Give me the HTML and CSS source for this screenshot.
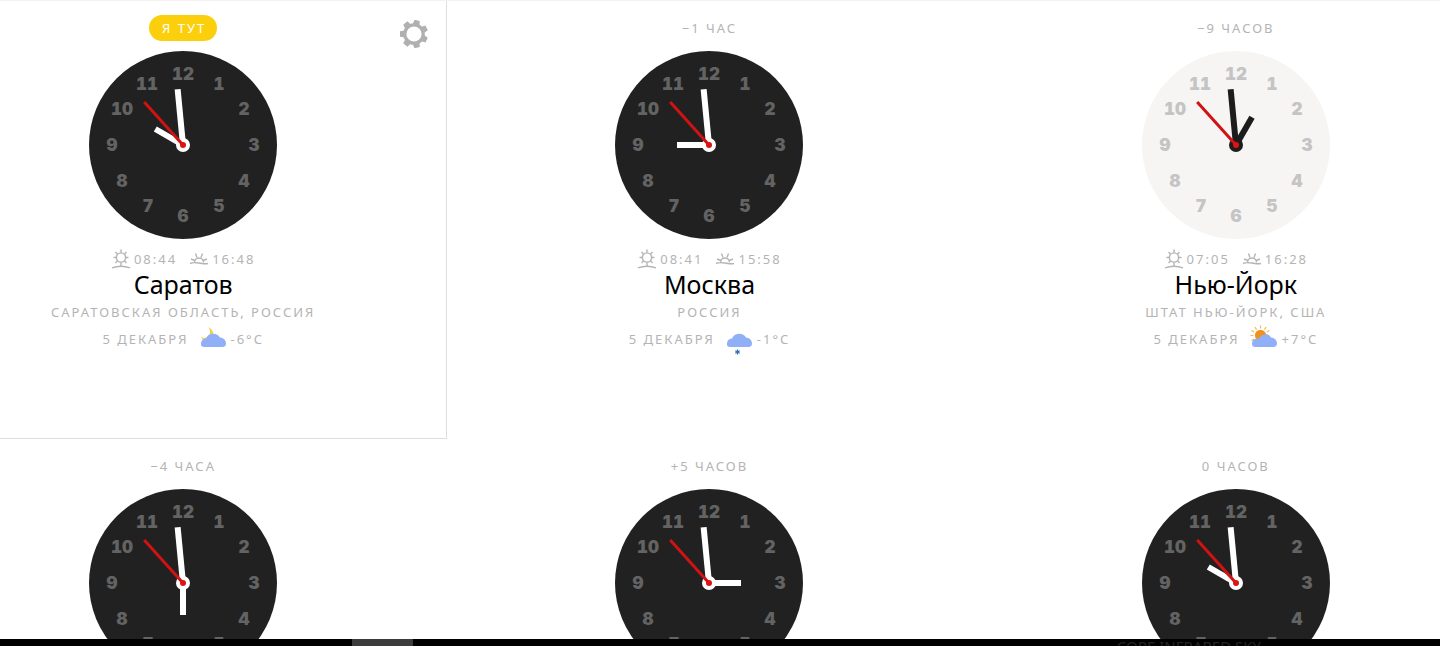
FILE: index.html
```html
<!DOCTYPE html>
<html lang="ru">
  <head>
    <meta charset="UTF-8" />
    <meta name="viewport" content="width=device-width, initial-scale=1.0" />
    <title>Время</title>
    <link rel="stylesheet" href="styles.css">
  </head>
  <body>
    <!-- shared shapes -->
    <svg class="sprite" aria-hidden="true">
      <symbol id="sunrise" viewBox="0 0 20 20">
        <circle cx="10" cy="8.500" r="4.600" />
        <path d="M10 .5v3M10 13.500v3M2.500 8.500h2.500M15 8.500h2.500M4.500 3l2 2M15.500 3l-2 2M4.500 14l2-2M15.500 14l-2-2M1 18.800q9-3.200 18 0" />
      </symbol>
      <symbol id="sunset" viewBox="0 0 20 20">
        <path d="M1 14.500q3-1.200 6-.8q3 .2 6 .8q3 .5 6 0M5.500 13.500a4.500 4.500 0 0 1 9 0M8 8.500L6.500 4.500M12 8.500L13.500 4.500M2 10l3.800 1.500M18 10l-3.800 1.500" />
      </symbol>
      <symbol id="cloud" viewBox="0 0 28 28">
        <path fill="#8fb0f7" d="M4.500 22a3.300 3.300 0 0 1-2.500-3.800a5.500 5.500 0 0 1 5-4.700a8 8 0 0 1 14-1a6 6 0 0 1 6 6a3.500 3.500 0 0 1-3 3.500z" />
      </symbol>
    </svg>

    <main class="page">
      <div class="cities">
        <article class="city city-here">
          <button class="settings" type="button" aria-label="Настройки">
            <svg viewBox="-14 -14 28 28">
              <circle r="9.200" fill="none" stroke="#b0b0b0" stroke-width="3.200" />
              <g fill="#b0b0b0">
                <path id="tooth" d="M-9-3.500L-14-2.700V2.700L-9 3.500z" />
                <use href="#tooth" transform="rotate(51.430)" />
                <use href="#tooth" transform="rotate(102.860)" />
                <use href="#tooth" transform="rotate(154.290)" />
                <use href="#tooth" transform="rotate(205.710)" />
                <use href="#tooth" transform="rotate(257.140)" />
                <use href="#tooth" transform="rotate(308.570)" />
              </g>
            </svg>
          </button>
          <div class="offset"><span class="badge">Я ТУТ</span></div>
          <svg class="clock" viewBox="0 0 188 188" data-hour="10"></svg>
          <div class="sun">
            <svg><use href="#sunrise" /></svg><span>08:44</span>
            <svg class="set"><use href="#sunset" /></svg><span>16:48</span>
          </div>
          <h2 class="name">Саратов</h2>
          <div class="region">САРАТОВСКАЯ ОБЛАСТЬ, РОССИЯ</div>
          <div class="weather">
            <span>5 ДЕКАБРЯ</span>
            <svg viewBox="0 0 28 28">
              <path fill="#f2cd4e" d="M9.500 2q3.500 6-.5 9.500q-3.500 2.500-7 .5q2 5 8 4q6.500-2.500 4-9q-1.500-3.500-4.500-5z" />
              <use href="#cloud" />
            </svg>
            <span>-6°C</span>
          </div>
        </article>

        <article class="city">
          <div class="offset">−1 ЧАС</div>
          <svg class="clock" viewBox="0 0 188 188" data-hour="9"></svg>
          <div class="sun">
            <svg><use href="#sunrise" /></svg><span>08:41</span>
            <svg class="set"><use href="#sunset" /></svg><span>15:58</span>
          </div>
          <h2 class="name">Москва</h2>
          <div class="region">РОССИЯ</div>
          <div class="weather">
            <span>5 ДЕКАБРЯ</span>
            <svg viewBox="0 0 28 28">
              <use href="#cloud" />
              <path stroke="#2a6fb5" stroke-width="1.200" d="M12.500 24.500v5M10.300 25.700l4.400 2.600M14.700 25.700l-4.400 2.600" />
            </svg>
            <span>-1°C</span>
          </div>
        </article>

        <article class="city">
          <div class="offset">−9 ЧАСОВ</div>
          <svg class="clock clock-day" viewBox="0 0 188 188" data-hour="1"></svg>
          <div class="sun">
            <svg><use href="#sunrise" /></svg><span>07:05</span>
            <svg class="set"><use href="#sunset" /></svg><span>16:28</span>
          </div>
          <h2 class="name">Нью-Йорк</h2>
          <div class="region">ШТАТ НЬЮ-ЙОРК, США</div>
          <div class="weather">
            <span>5 ДЕКАБРЯ</span>
            <svg viewBox="0 0 28 28">
              <path stroke="#f3b95a" stroke-width="1.200" d="M10.500 .5v3M5 2l1.500 2.600M16 2l-1.500 2.600M1.500 5.500l2.600 1.500M19.500 5.500l-2.600 1.500M.5 10.500h3M1.500 15.500l2.600-1.500" />
              <circle cx="10.500" cy="10.500" r="5.500" fill="#f0921e" />
              <use href="#cloud" />
              <path fill="#f0921e" d="M5.200 9.500a5.500 5.500 0 0 1 10.600-.3q-5 .3-7.300 5q-3-1.500-3.300-4.700z" />
            </svg>
            <span>+7°C</span>
          </div>
        </article>

        <article class="city">
          <div class="offset">−4 ЧАСА</div>
          <svg class="clock" viewBox="0 0 188 188" data-hour="6"></svg>
        </article>

        <article class="city">
          <div class="offset">+5 ЧАСОВ</div>
          <svg class="clock" viewBox="0 0 188 188" data-hour="3"></svg>
        </article>

        <article class="city">
          <div class="offset">0 ЧАСОВ</div>
          <svg class="clock" viewBox="0 0 188 188" data-hour="10"></svg>
        </article>
      </div>
    </main>

    <footer class="taskbar">
      <div class="task"></div>
      <div class="caption">CORE INFRARED SKY</div>
    </footer>

    <script>
      const CENTER = 94;
      const DIGIT_RADIUS = 71;
      const MINUTE_ANGLE = -5.5;
      const SECOND_ANGLE = -42;

      function hand(className, length, angle) {
        return `<path class="${className}" d="M94 94V${CENTER - length}" transform="rotate(${angle} 94 94)" />`;
      }

      function drawClock(clock) {
        let digits = "";
        for (let i = 1; i <= 12; i++) {
          const angle = (i * Math.PI) / 6;
          const x = Math.round(CENTER + DIGIT_RADIUS * Math.sin(angle));
          const y = Math.round(CENTER - DIGIT_RADIUS * Math.cos(angle)) + 6;
          digits += `<text x="${x}" y="${y}">${i}</text>`;
        }

        clock.innerHTML =
          `<circle class="face" cx="94" cy="94" r="94" />` +
          `<g class="digits">${digits}</g>` +
          hand("hand", 32, clock.dataset.hour * 30) +
          hand("hand", 56, MINUTE_ANGLE) +
          `<circle class="hub" cx="94" cy="94" r="7" />` +
          hand("second", 58, SECOND_ANGLE) +
          `<circle class="pin" cx="94" cy="94" r="3" />`;
      }

      document.querySelectorAll(".clock").forEach(drawClock);
    </script>
  </body>
</html>
```
FILE: styles.css
```css
* {
  margin: 0;
  padding: 0;
  box-sizing: border-box;
}

body {
  font-family: "Noto Sans", "Open Sans", sans-serif;
  font-size: 13px;
  line-height: 20px;
  letter-spacing: 2px;
  color: #b4b4b4;
  background-color: #fff;
  display: flex;
  flex-direction: column;
  height: 100vh;
  overflow: hidden;
}

.sprite {
  position: absolute;
  width: 0;
  height: 0;
}

.page {
  flex: 1;
  min-height: 0;
  overflow: hidden;
  border-top: 1px solid #f2f2f2;
}

.cities {
  display: grid;
  grid-template-columns: repeat(3, 1fr);
  grid-auto-rows: 438px;
  column-gap: 160px;
  padding-right: 21px;
}

.city {
  display: flex;
  flex-direction: column;
  align-items: center;
  padding-top: 14px;
}

.city-here {
  position: relative;
  margin-top: -1px;
  margin-right: -81px;
  padding-right: 80px;
  border: 1px solid #dedede;
  border-left: none;
}

.settings {
  position: absolute;
  top: 19px;
  right: 18px;
  width: 28px;
  height: 28px;
  border: none;
  background: none;
  cursor: pointer;
}

.settings svg {
  display: block;
}

.offset {
  height: 26px;
  line-height: 26px;
  margin-bottom: 10px;
}

.badge {
  display: block;
  padding: 0 11px 0 13px;
  border-radius: 13px;
  background-color: #fccf0c;
  color: #fff;
}

.clock {
  width: 188px;
  height: 188px;
  flex-shrink: 0;
  --face: #212121;
  --digit: #636363;
  --hand: #fff;
}

.clock-day {
  --face: #f6f5f3;
  --digit: #c4c4c4;
  --hand: #1c1c1c;
}

.face {
  fill: var(--face);
}

.digits {
  fill: var(--digit);
  font-family: Inter, sans-serif;
  font-size: 17px;
  font-weight: 900;
  font-variant-numeric: tabular-nums;
  letter-spacing: 0;
  text-anchor: middle;
}

.hand {
  stroke: var(--hand);
  stroke-width: 6px;
}

.hub {
  fill: var(--hand);
}

.second {
  stroke: #d01212;
  stroke-width: 3px;
}

.pin {
  fill: #dd1414;
}

.sun {
  display: flex;
  align-items: center;
  margin-top: 10px;
}

.sun svg {
  width: 20px;
  height: 20px;
  margin-right: 3px;
  fill: none;
  stroke: #b4b4b4;
  stroke-width: 1.4;
}

.sun .set {
  margin-left: 12px;
}

.name {
  color: #000;
  font-size: 25px;
  font-weight: 400;
  line-height: 30px;
  letter-spacing: 0;
}

.region {
  line-height: 26px;
}

.weather {
  display: flex;
  align-items: center;
  height: 28px;
}

.weather svg {
  width: 28px;
  height: 28px;
  margin: 0 4px 0 10px;
  overflow: visible;
}

.taskbar {
  display: flex;
  justify-content: space-between;
  height: 7px;
  background-color: #000;
  overflow: hidden;
  padding: 0 179px 0 352px;
}

.task {
  width: 61px;
  background-color: #3c3c3c;
}

.caption {
  color: #242424;
  font-size: 15px;
  line-height: 14px;
  letter-spacing: 0;
}
```
